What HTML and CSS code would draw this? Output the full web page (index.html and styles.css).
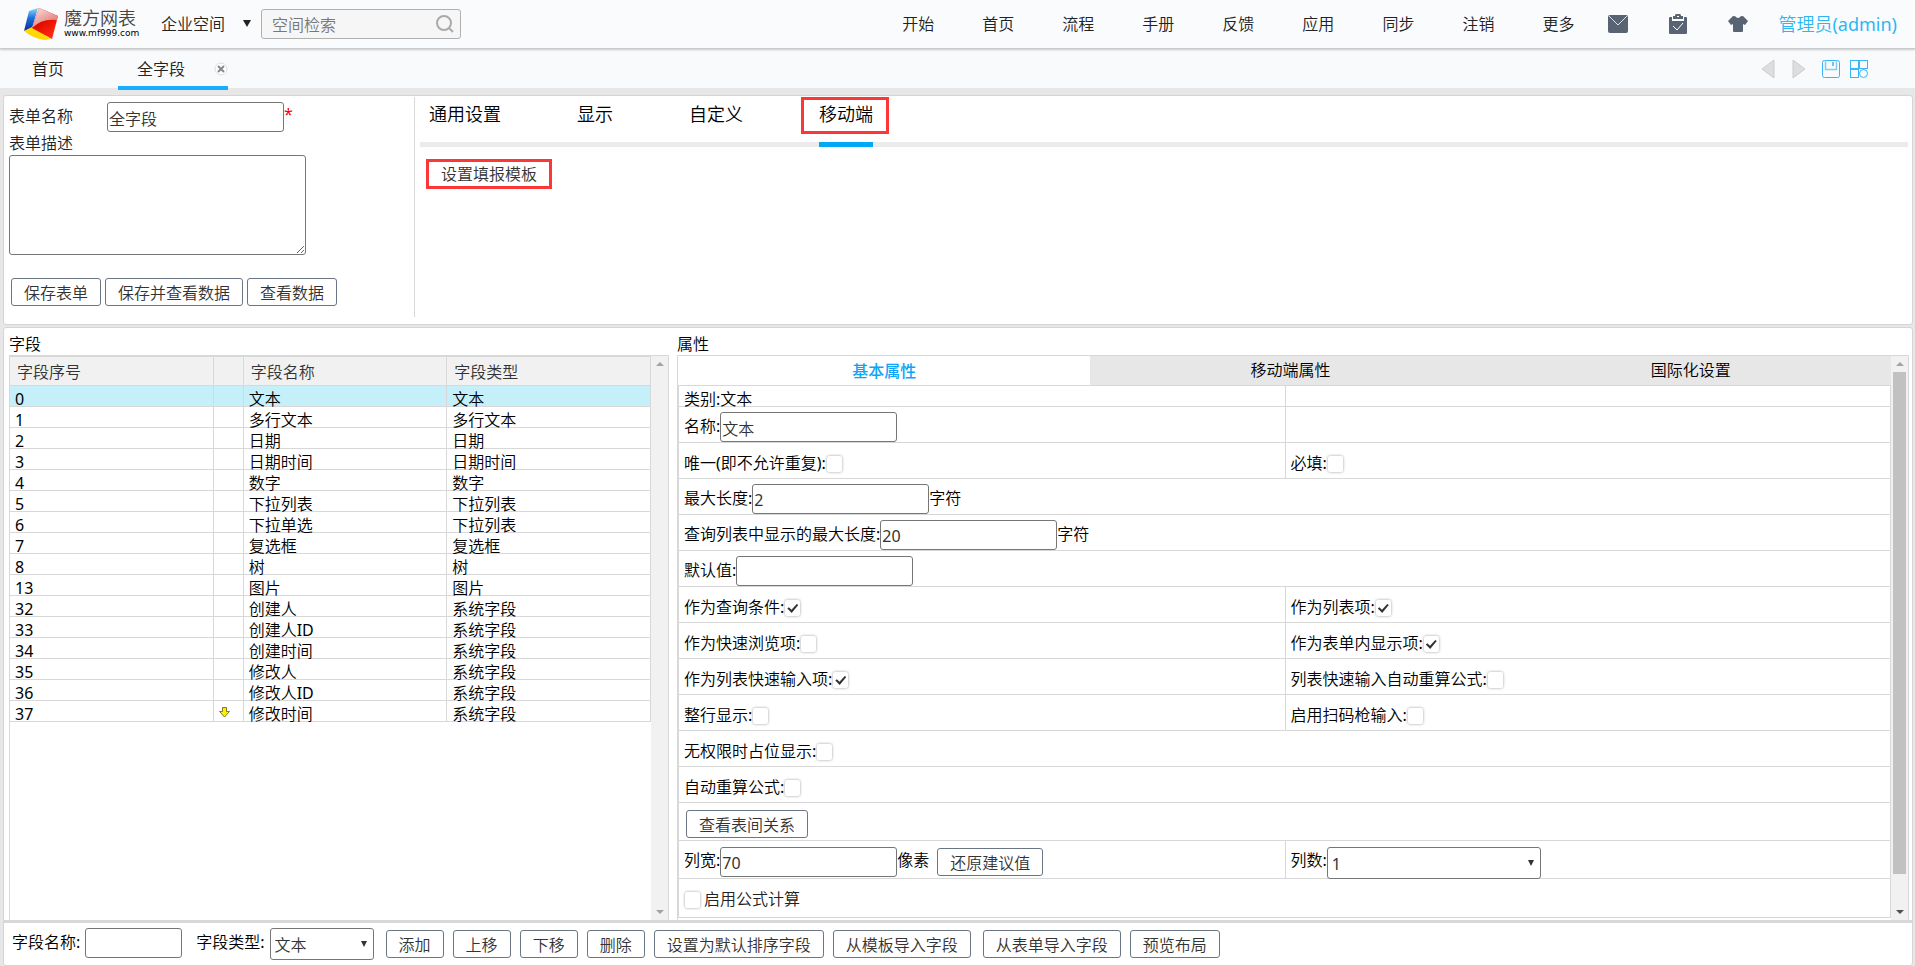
FILE: index.html
```html
<!DOCTYPE html>
<html lang="zh-Hans">
<head>
  <meta charset="UTF-8" />
  <meta name="viewport" content="width=device-width, initial-scale=1.0"/>
  <title>魔方网表</title>
  <link rel="stylesheet" href="styles.css">
</head>
<body>
  <header class="header">
    <a class="logo" href="#">
      <svg class="logo-mark" width="36" height="34" viewBox="0 0 36 34">
        <defs>
          <linearGradient id="blueFace" x1="0" y1="0" x2="0" y2="1">
            <stop offset="0" stop-color="#8fd8ff"/>
            <stop offset="0.45" stop-color="#1a6fd8"/>
            <stop offset="1" stop-color="#0a2a9c"/>
          </linearGradient>
          <linearGradient id="redFace" x1="0" y1="0" x2="0.6" y2="1">
            <stop offset="0" stop-color="#a80000"/>
            <stop offset="0.6" stop-color="#e81000"/>
            <stop offset="1" stop-color="#ff2a10"/>
          </linearGradient>
          <linearGradient id="pinkFace" x1="0" y1="0" x2="0.7" y2="1">
            <stop offset="0" stop-color="#fbe3e0"/>
            <stop offset="1" stop-color="#e0706c"/>
          </linearGradient>
        </defs>
        <path d="M6 4 L15 1 L9 21 L1 24 Z" fill="url(#blueFace)"/>
        <path d="M1 24 L9 20 L28 32 L22 33 Q11 32 1 24 Z" fill="#ffd800"/>
        <path d="M16 1 L35 9 L29 32 L9 21 Z" fill="url(#redFace)"/>
        <path d="M16 1 L35 9 L34 13 Q19 11 9 21 Z" fill="url(#pinkFace)"/>
      </svg>
      <span class="logo-text">
        <span class="logo-name">魔方网表</span>
        <span class="logo-url">www.mf999.com</span>
      </span>
    </a>
    <button class="space-switch" type="button">企业空间<span class="caret"></span></button>
    <form class="search">
      <input type="text" placeholder="空间检索" aria-label="空间检索">
      <button type="button" aria-label="检索">
        <svg width="20" height="20" viewBox="0 0 20 20" fill="none" stroke="#aaa" stroke-width="2">
          <circle cx="9" cy="9" r="7"/>
          <path d="M14 14 L18 18"/>
        </svg>
      </button>
    </form>
    <nav class="nav">
      <a href="#">开始</a>
      <a href="#">首页</a>
      <a href="#">流程</a>
      <a href="#">手册</a>
      <a href="#">反馈</a>
      <a href="#">应用</a>
      <a href="#">同步</a>
      <a href="#">注销</a>
      <a href="#">更多</a>
    </nav>
    <div class="tools">
      <a href="#" aria-label="消息">
        <svg width="20" height="20" viewBox="0 0 20 20">
          <rect x="0" y="1" width="20" height="18" rx="2" fill="#586474"/>
          <path d="M1 2 L10 11 L19 2" fill="none" stroke="#dfe3e8"/>
        </svg>
      </a>
      <a href="#" aria-label="待办">
        <svg width="20" height="20" viewBox="0 0 20 20">
          <path d="M2 3 H4 V7 H16 V3 H18 Q19 3 19 4 V19 Q19 20 18 20 H2 Q1 20 1 19 V4 Q1 3 2 3 Z" fill="#586474"/>
          <path d="M5 2 H7 Q7 0 8 0 H12 Q13 0 13 2 H15 V5 H5 Z" fill="#586474"/>
          <rect x="9" y="2" width="2" height="1" fill="#fff"/>
          <path d="M5 12 L9 16 L15 9" fill="none" stroke="#fff"/>
        </svg>
      </a>
      <a href="#" aria-label="换肤">
        <svg width="20" height="20" viewBox="0 0 20 20">
          <path d="M5 2 Q8 2 8 3 Q10 5 12 3 Q12 2 15 2 L20 7 L17 11 L15 10 V17 Q15 18 14 18 H6 Q5 18 5 17 V10 L3 11 L0 7 Z" fill="#586474"/>
        </svg>
      </a>
    </div>
    <a class="user" href="#">管理员(admin)</a>
  </header>

  <div class="tabbar">
    <a class="tab" href="#">首页</a>
    <div class="tab active">
      <a href="#">全字段</a>
      <button class="tab-close" type="button" aria-label="关闭">
        <svg width="14" height="14" viewBox="0 0 14 14">
          <circle cx="7" cy="7" r="6" fill="#fff" stroke="#ddd"/>
          <path d="M4 4 L10 10 M10 4 L4 10" stroke="#888" stroke-width="2"/>
        </svg>
      </button>
    </div>
    <div class="tab-tools">
      <div class="tab-group history">
        <button type="button" aria-label="后退">
          <svg width="14" height="20" viewBox="0 0 14 20"><path d="M13 1 V19 L1 10 Z" fill="#dedede" stroke="#ccc"/></svg>
        </button>
        <button type="button" aria-label="前进">
          <svg width="14" height="20" viewBox="0 0 14 20"><path d="M1 1 V19 L13 10 Z" fill="#dedede" stroke="#ccc"/></svg>
        </button>
      </div>
      <div class="tab-group">
        <button type="button" aria-label="保存">
          <svg width="20" height="20" viewBox="0 0 20 20" fill="none" stroke="#39b4f8">
            <rect x="1.5" y="1.5" width="17" height="17" rx="2"/>
            <path d="M4.500 1.500 V10.500 H15.500 V1.500" stroke="#7fcdfb" stroke-width="1.500"/>
            <path d="M12 3 V7" stroke-width="1.500"/>
          </svg>
        </button>
        <button type="button" aria-label="布局">
          <svg width="20" height="20" viewBox="0 0 20 20" fill="none" stroke="#39b4f8">
            <rect x="1.500" y="1.500" width="8" height="8"/>
            <rect x="10.500" y="1.500" width="8" height="8"/>
            <rect x="1.500" y="10.500" width="8" height="8"/>
            <circle cx="14.500" cy="14.500" r="4"/>
          </svg>
        </button>
      </div>
    </div>
  </div>

  <main class="page">
    <section class="panel form-panel">
      <form class="form-info">
        <div class="form-row">
          <label for="formName">表单名称</label>
          <input class="text" type="text" id="formName" value="全字段"><span class="required">*</span>
        </div>
        <label class="desc-label" for="formDesc">表单描述</label>
        <textarea id="formDesc"></textarea>
        <div class="form-actions">
          <button class="btn" type="button">保存表单</button>
          <button class="btn" type="button">保存并查看数据</button>
          <button class="btn" type="button">查看数据</button>
        </div>
      </form>
      <div class="settings">
        <nav class="settings-tabs">
          <a href="#">通用设置</a>
          <a href="#">显示</a>
          <a href="#">自定义</a>
          <a class="active" href="#">移动端</a>
        </nav>
        <button class="btn marked" type="button">设置填报模板</button>
      </div>
    </section>

    <section class="panel detail-panel">
      <div class="columns">
        <section class="column">
          <h2>字段</h2>
          <div class="scroll-box">
            <div class="scroll-content">
              <table class="fields">
                <colgroup><col><col class="col-mark"><col><col></colgroup>
                <thead>
                  <tr><th>字段序号</th><th></th><th>字段名称</th><th>字段类型</th></tr>
                </thead>
                <tbody>
                  <tr class="selected"><td>0</td><td></td><td>文本</td><td>文本</td></tr>
                  <tr><td>1</td><td></td><td>多行文本</td><td>多行文本</td></tr>
                  <tr><td>2</td><td></td><td>日期</td><td>日期</td></tr>
                  <tr><td>3</td><td></td><td>日期时间</td><td>日期时间</td></tr>
                  <tr><td>4</td><td></td><td>数字</td><td>数字</td></tr>
                  <tr><td>5</td><td></td><td>下拉列表</td><td>下拉列表</td></tr>
                  <tr><td>6</td><td></td><td>下拉单选</td><td>下拉列表</td></tr>
                  <tr><td>7</td><td></td><td>复选框</td><td>复选框</td></tr>
                  <tr><td>8</td><td></td><td>树</td><td>树</td></tr>
                  <tr><td>13</td><td></td><td>图片</td><td>图片</td></tr>
                  <tr><td>32</td><td></td><td>创建人</td><td>系统字段</td></tr>
                  <tr><td>33</td><td></td><td>创建人ID</td><td>系统字段</td></tr>
                  <tr><td>34</td><td></td><td>创建时间</td><td>系统字段</td></tr>
                  <tr><td>35</td><td></td><td>修改人</td><td>系统字段</td></tr>
                  <tr><td>36</td><td></td><td>修改人ID</td><td>系统字段</td></tr>
                  <tr>
                    <td>37</td>
                    <td>
                      <svg class="sort-arrow" width="11" height="11" viewBox="0 0 11 11">
                        <path d="M3.500 0.500 H7.500 V4.500 H10.500 L5.500 10 L0.500 4.500 H3.500 Z" fill="#ffee00" stroke="#7d7a2a"/>
                      </svg>
                    </td>
                    <td>修改时间</td><td>系统字段</td>
                  </tr>
                </tbody>
              </table>
            </div>
            <div class="scrollbar disabled"><span class="up"></span><span class="down"></span></div>
          </div>
        </section>

        <section class="column">
          <h2>属性</h2>
          <div class="scroll-box">
            <div class="scroll-content">
              <nav class="prop-tabs">
                <a class="active" href="#">基本属性</a>
                <a href="#">移动端属性</a>
                <a href="#">国际化设置</a>
              </nav>
              <div class="props">
                <div class="prop-row short">
                  <div class="cell">类别:文本</div>
                  <div class="cell"></div>
                </div>
                <div class="prop-row">
                  <div class="cell"><label for="name">名称:</label><input class="text" type="text" id="name" value="文本"></div>
                  <div class="cell"></div>
                </div>
                <div class="prop-row">
                  <label class="cell check">唯一(即不允许重复):<input type="checkbox"></label>
                  <label class="cell check">必填:<input type="checkbox"></label>
                </div>
                <div class="prop-row">
                  <div class="cell"><label for="maxLen">最大长度:</label><input class="text" type="text" id="maxLen" value="2">字符</div>
                </div>
                <div class="prop-row">
                  <div class="cell"><label for="listLen">查询列表中显示的最大长度:</label><input class="text" type="text" id="listLen" value="20">字符</div>
                </div>
                <div class="prop-row">
                  <div class="cell"><label for="defVal">默认值:</label><input class="text" type="text" id="defVal"></div>
                </div>
                <div class="prop-row">
                  <label class="cell check">作为查询条件:<input type="checkbox" checked></label>
                  <label class="cell check">作为列表项:<input type="checkbox" checked></label>
                </div>
                <div class="prop-row">
                  <label class="cell check">作为快速浏览项:<input type="checkbox"></label>
                  <label class="cell check">作为表单内显示项:<input type="checkbox" checked></label>
                </div>
                <div class="prop-row">
                  <label class="cell check">作为列表快速输入项:<input type="checkbox" checked></label>
                  <label class="cell check">列表快速输入自动重算公式:<input type="checkbox"></label>
                </div>
                <div class="prop-row">
                  <label class="cell check">整行显示:<input type="checkbox"></label>
                  <label class="cell check">启用扫码枪输入:<input type="checkbox"></label>
                </div>
                <div class="prop-row">
                  <label class="cell check">无权限时占位显示:<input type="checkbox"></label>
                </div>
                <div class="prop-row">
                  <label class="cell check">自动重算公式:<input type="checkbox"></label>
                </div>
                <div class="prop-row tall">
                  <div class="cell"><button class="btn relation" type="button">查看表间关系</button></div>
                </div>
                <div class="prop-row tall">
                  <div class="cell"><label for="colWidth">列宽:</label><input class="text" type="text" id="colWidth" value="70">像素<button class="btn restore" type="button">还原建议值</button></div>
                  <div class="cell"><label for="colCount">列数:</label><span class="select wide"><select id="colCount"><option>1</option></select></span></div>
                </div>
                <div class="prop-row tall">
                  <label class="cell check formula"><input type="checkbox">启用公式计算</label>
                </div>
              </div>
            </div>
            <div class="scrollbar"><span class="up"></span><span class="thumb"></span><span class="down"></span></div>
          </div>
        </section>
      </div>

      <form class="bottom-bar">
        <div class="field"><label for="newName">字段名称:</label><input class="text small" type="text" id="newName"></div>
        <div class="field"><label for="newType">字段类型:</label><span class="select"><select id="newType"><option>文本</option></select></span></div>
        <div class="actions">
          <button class="btn" type="button">添加</button>
          <button class="btn" type="button">上移</button>
          <button class="btn" type="button">下移</button>
          <button class="btn" type="button">删除</button>
          <button class="btn" type="button">设置为默认排序字段</button>
          <button class="btn" type="button">从模板导入字段</button>
        </div>
        <div class="actions">
          <button class="btn" type="button">从表单导入字段</button>
          <button class="btn" type="button">预览布局</button>
        </div>
      </form>
    </section>
  </main>
</body>
</html>
```

FILE: styles.css
```css
* { margin: 0; padding: 0; box-sizing: border-box; }
body, input, select, textarea, button {
  font-family: "Noto Sans", "Noto Sans CJK SC DemiLight", "Noto Sans CJK SC", sans-serif;
  font-size: 16px;
  font-weight: 400;
  line-height: 20px;
}
body {
  display: flex;
  flex-direction: column;
  height: 100vh;
  background: #e7e7e7;
  color: #000;
  overflow: hidden;
}
a { color: inherit; text-decoration: none; }
button { background: none; border: 0; cursor: pointer; color: #333; }
svg { display: block; }

/* header */
.header {
  display: flex;
  align-items: center;
  height: 49px;
  flex-shrink: 0;
  padding: 0 18px 1px 23px;
  background: #fafbfd;
  border-bottom: 1px solid #c8cacb;
  box-shadow: 0 1px 2px rgba(0,0,0,0.2);
  color: #222;
  z-index: 1;
}
.logo { display: flex; align-items: center; gap: 5px; width: 138px; }
.logo-text { display: flex; flex-direction: column; }
.logo-name { font-size: 18px; line-height: 20px; color: #444; }
.logo-url {
  font-family: "DejaVu Sans", sans-serif;
  font-size: 9px;
  line-height: 11px;
  color: #000;
}
.space-switch { display: flex; align-items: center; gap: 18px; color: #222; }
.caret {
  border: 4px solid transparent;
  border-top: 7px solid #222;
  border-bottom: 0;
}
.search {
  display: flex;
  align-items: center;
  width: 200px;
  height: 30px;
  margin-left: 10px;
  padding: 0 5px 0 10px;
  border: 1px solid #b0b0b0;
  border-radius: 3px;
  background: #f6f6f6;
}
.search input {
  flex: 1;
  min-width: 0;
  border: 0;
  background: none;
  outline: 0;
  padding-top: 3px;
}
.search input::placeholder { color: #777; }
.nav { display: flex; gap: 48px; margin-left: auto; }
.tools { display: flex; gap: 40px; margin: 0 30px 0 34px; }
.user { font-size: 18px; color: #2cb7f3; }

/* opened pages */
.tabbar {
  display: flex;
  align-items: center;
  height: 39px;
  flex-shrink: 0;
  padding: 0 46px 0 32px;
  background: #f9fafc;
  color: #222;
}
.tab.active {
  display: flex;
  align-items: center;
  justify-content: space-between;
  position: relative;
  width: 110px;
  height: 36px;
  margin-left: 54px;
  padding: 0 0 0 19px;
}
.tab.active::after {
  content: "";
  position: absolute;
  left: 0;
  right: 0;
  bottom: -3px;
  height: 4px;
  background: #1aadff;
}
.tab-tools { display: flex; gap: 15px; margin-left: auto; }
.tab-group { display: flex; gap: 8px; }
.tab-group.history { gap: 17px; }

/* panels */
.page {
  flex: 1;
  min-height: 0;
  display: flex;
  flex-direction: column;
  gap: 2px;
  padding: 7px 2px 0 3px;
}
.panel { background: #fff; border: 1px solid #d5d5d5; border-radius: 3px; }
.form-panel { display: flex; flex-shrink: 0; }
.form-info { flex: 0 0 410px; padding: 6px 5px 18px; color: #222; }
.form-row { display: flex; align-items: flex-start; line-height: 28px; }
.form-row label { width: 98px; }
.required { line-height: 24px; color: #f00; }
.desc-label { display: block; line-height: 23px; }
textarea {
  display: block;
  width: 297px;
  height: 100px;
  border: 1px solid #767676;
  border-radius: 3px;
}
.form-actions { display: flex; gap: 4px; margin: 23px 0 0 2px; }

.text {
  width: 177px;
  height: 30px;
  padding: 2px 0 0 1px;
  border: 1px solid #767676;
  border-radius: 3px;
  background: #fff;
  color: #333;
}
.text.small { width: 97px; }
.btn {
  height: 28px;
  padding: 2px 12px 0;
  border: 1px solid #6b7685;
  border-radius: 3px;
  background: #fff;
  white-space: nowrap;
}
.select { position: relative; width: 104px; }
.select.wide { width: 214px; }
.select select {
  display: block;
  width: 100%;
  height: 32px;
  padding: 2px 0 0 4px;
  border: 1px solid #767676;
  border-radius: 3px;
  background: #fff;
  color: #333;
  appearance: none;
}
.select::after {
  content: "";
  position: absolute;
  right: 7px;
  top: 13px;
  border: 3px solid transparent;
  border-top: 6px solid #333;
  border-bottom: 0;
}

.settings { flex: 1; margin: 1px 0 7px; padding-left: 5px; border-left: 1px solid #d8d8d8; }
.settings-tabs {
  display: flex;
  gap: 76px;
  height: 50px;
  margin-right: 4px;
  padding-left: 9px;
  border-bottom: 5px solid #ebebeb;
  font-size: 18px;
  line-height: 35px;
}
.settings-tabs .active { position: relative; height: 50px; border-bottom: 5px solid #00a8f5; }
.settings-tabs .active::before {
  content: "";
  position: absolute;
  left: -18px;
  right: -16px;
  top: 0;
  height: 31px;
  border: 3px solid #fb3737;
}
.btn.marked {
  height: 30px;
  margin: 12px 0 0 6px;
  padding: 0 12px;
  border: 3px solid #fb3737;
  border-radius: 0;
}

/* fields and properties */
.detail-panel { flex: 1; min-height: 0; display: flex; flex-direction: column; }
.columns {
  flex: 1;
  min-height: 0;
  display: grid;
  grid-template-columns: 15fr 28fr;
  grid-template-rows: minmax(0, 1fr);
  gap: 8px;
  padding: 0 3px 0 5px;
}
.column { display: flex; flex-direction: column; min-height: 0; }
h2 { padding: 6px 0 1px; font-size: 16px; font-weight: 400; line-height: 20px; }
.scroll-box {
  flex: 1;
  min-height: 0;
  display: flex;
  border: 1px solid #d8d8d8;
  border-bottom: 0;
}
.scroll-content { flex: 1; min-width: 0; overflow: hidden; }
.scrollbar {
  display: flex;
  flex-direction: column;
  align-items: center;
  justify-content: space-between;
  width: 17px;
  padding: 6px 0;
  background: #f1f1f1;
}
.up, .down { border: 4px solid transparent; }
.up { border-top: 0; border-bottom: 4px solid #a3a3a3; }
.down { border-bottom: 0; border-top: 4px solid #505050; }
.disabled .down { border-top-color: #a3a3a3; }
.thumb { width: 13px; flex: 0 0 91%; margin-bottom: auto; margin-top: 6px; background: #c1c1c1; }

.fields { width: 100%; table-layout: fixed; border-collapse: separate; border-spacing: 0; border-top: 1px solid #d8d8d8; }
.col-mark { width: 30px; }
.fields th {
  height: 29px;
  padding: 2px 0 0 7px;
  background: #f1f1f1;
  color: #333;
  font-weight: 400;
  text-align: left;
}
.fields td { height: 21px; padding: 6px 0 0 5px; line-height: 14px; vertical-align: top; }
.fields th, .fields td { border-right: 1px solid #d8d8d8; border-bottom: 1px solid #d8d8d8; }
.selected td { background: #c5eff9; }

.prop-tabs {
  display: grid;
  grid-template-columns: 34fr 33fr 33fr;
  background: #e7e7e7;
  border-bottom: 1px solid #d8d8d8;
  line-height: 29px;
  text-align: center;
}
.prop-tabs .active {
  background: #fff;
  color: #0ea5f5;
  font-family: "Noto Sans CJK SC", sans-serif;
  font-weight: 500;
}
.props { border-left: 1px solid #d8d8d8; border-right: 1px solid #d8d8d8; }
.prop-row { display: flex; height: 36px; border-bottom: 1px solid #d8d8d8; }
.prop-row.short { height: 21px; }
.prop-row.tall { height: 38px; }
.prop-row.tall:last-child { height: 39px; }
.cell { flex: 1; display: flex; align-items: flex-start; padding: 5px 0 0 5px; line-height: 28px; }
.cell:first-child:not(:last-child) { flex: 0 0 50%; }
.cell + .cell { border-left: 1px solid #d8d8d8; }
.short .cell { padding-top: 5px; line-height: 16px; }
.tall .cell { padding-top: 6px; line-height: 27px; }
.cell.check { padding-top: 7px; line-height: 27px; }
.tall .cell.formula { padding-top: 7px; gap: 3px; color: #222; }
.relation { margin: 1px 0 0 2px; }
.restore { margin: 1px 0 0 8px; }
input[type="checkbox"] {
  appearance: none;
  position: relative;
  width: 15px;
  height: 16px;
  margin: 6px 1px 0 1px;
  background: #fff;
  border-radius: 2px;
  box-shadow: 0 0 3px rgba(0,0,0,0.4);
}
input[type="checkbox"]:checked::after {
  content: "";
  position: absolute;
  left: 2px;
  top: 4px;
  width: 11px;
  height: 9px;
  background: #333;
  clip-path: polygon(0 50%, 14% 35%, 38% 65%, 86% 0, 100% 12%, 40% 100%);
}

/* bottom bar */
.bottom-bar {
  display: flex;
  align-items: flex-start;
  gap: 12px;
  padding: 5px 8px 5px;
  border-top: 3px solid #d8d8d8;
}
.field { display: flex; gap: 5px; line-height: 28px; }
.field + .field { margin-left: 2px; }
.actions { display: flex; gap: 9px; padding-top: 2px; }
```
